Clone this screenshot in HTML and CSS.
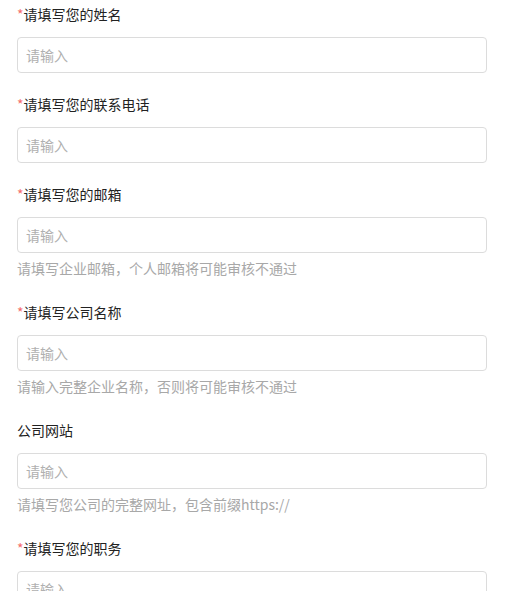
FILE: index.html
```html
<!DOCTYPE html>
<html lang="zh">
<head>
<meta charset="utf-8">
<link rel="stylesheet" href="styles.css">
</head>
<body>
<form class="form">
  <div class="field">
    <label class="label"><span class="req">*</span>请填写您的姓名</label>
    <input class="input" placeholder="请输入">
  </div>
  <div class="field">
    <label class="label"><span class="req">*</span>请填写您的联系电话</label>
    <input class="input" placeholder="请输入">
  </div>
  <div class="field">
    <label class="label"><span class="req">*</span>请填写您的邮箱</label>
    <input class="input" placeholder="请输入">
    <div class="hint">请填写企业邮箱，个人邮箱将可能审核不通过</div>
  </div>
  <div class="field">
    <label class="label"><span class="req">*</span>请填写公司名称</label>
    <input class="input" placeholder="请输入">
    <div class="hint">请输入完整企业名称，否则将可能审核不通过</div>
  </div>
  <div class="field">
    <label class="label">公司网站</label>
    <input class="input" placeholder="请输入">
    <div class="hint">请填写您公司的完整网址，包含前缀https://</div>
  </div>
  <div class="field">
    <label class="label"><span class="req">*</span>请填写您的职务</label>
    <input class="input" placeholder="请输入">
  </div>
</form>
</body>
</html>
```
FILE: styles.css
```css
html, body {
  margin: 0;
  padding: 0;
  background: #fff;
  overflow: hidden;
}
body {
  font-family: "Noto Sans CJK SC", "Microsoft YaHei", sans-serif;
  font-size: 14px;
  color: #333;
}
.form {
  padding: 4px 20px 0 17px;
  display: flex;
  flex-direction: column;
}
.field {
  display: flex;
  flex-direction: column;
  padding-bottom: 21px;
}
.label {
  display: block;
  height: 21px;
  line-height: 21px;
  margin-bottom: 12px;
  color: #222;
}
.req {
  color: #f56c6c;
}
.input {
  box-sizing: border-box;
  width: 470px;
  height: 36px;
  border: 1px solid #dcdcdc;
  border-radius: 4px;
  padding: 0 8px;
  font-family: inherit;
  font-size: 14px;
  color: #333;
  outline: none;
  margin: 0;
}
.input::placeholder {
  color: #b0b0b0;
}
.hint {
  margin-top: 6px;
  line-height: 19px;
  color: #a8a8a8;
  margin-bottom: 3px;
}
```
